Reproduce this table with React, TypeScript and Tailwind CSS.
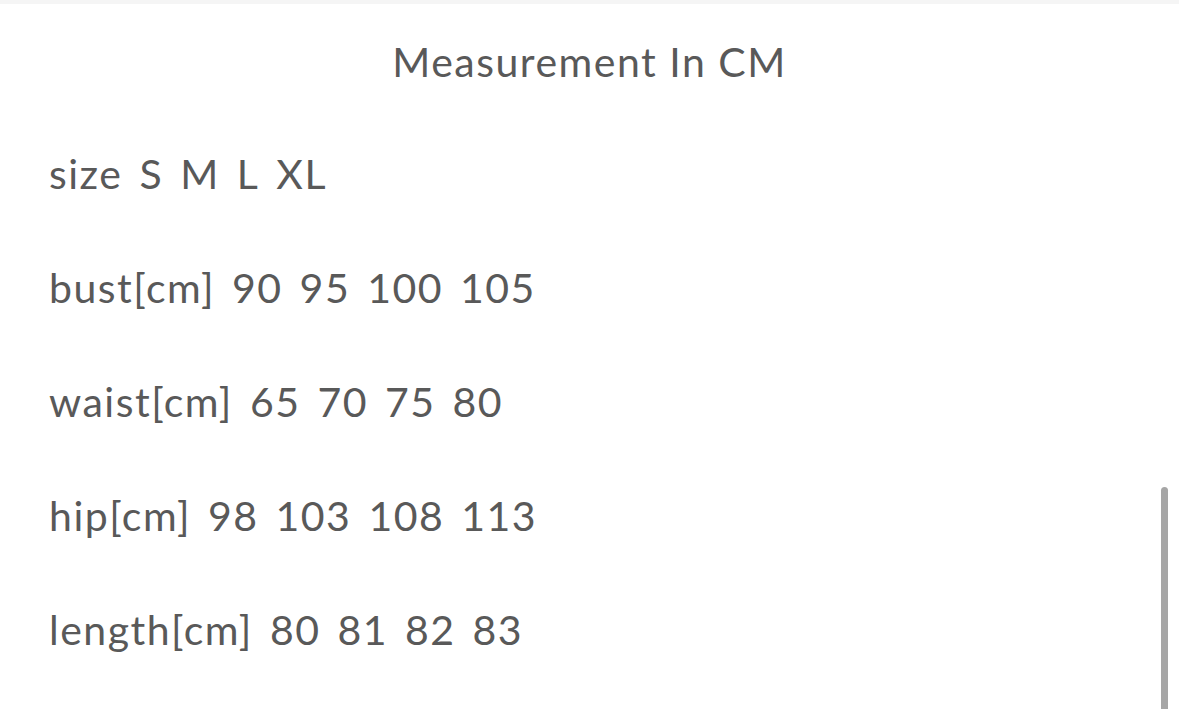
import React from 'react';

const rows = [
  ['size', 'S', 'M', 'L', 'XL'],
  ['bust[cm]', '90', '95', '100', '105'],
  ['waist[cm]', '65', '70', '75', '80'],
  ['hip[cm]', '98', '103', '108', '113'],
  ['length[cm]', '80', '81', '82', '83'],
];

const App: React.FC = () => {
  return (
    <div
      className="relative h-[709px] w-full overflow-hidden bg-white text-[#595959]"
      style={{ fontFamily: 'Lato, "Open Sans", sans-serif' }}
    >
      <div className="h-[4px] w-full bg-[#f5f5f5]" />

      {/* Title */}
      <div className="flex h-[114px] items-center justify-center text-[41px] leading-none tracking-[1.5px]">
        Measurement In CM
      </div>

      {/* Size rows */}
      <div className="flex flex-col px-[49px]">
        {rows.map((r) => (
          <div
            key={r[0]}
            className="flex h-[114px] items-center gap-[17px] text-[41px] leading-none tracking-[1.5px] -mt-[2px] mb-[2px]"
          >
            {r.map((t, i) => (
              <span key={i}>{t}</span>
            ))}
          </div>
        ))}
      </div>

      {/* scrollbar */}
      <div className="absolute right-[11px] top-[487px] h-[230px] w-[7px] rounded-full bg-[#a6a6a6]" />
    </div>
  );
};

export default App;
